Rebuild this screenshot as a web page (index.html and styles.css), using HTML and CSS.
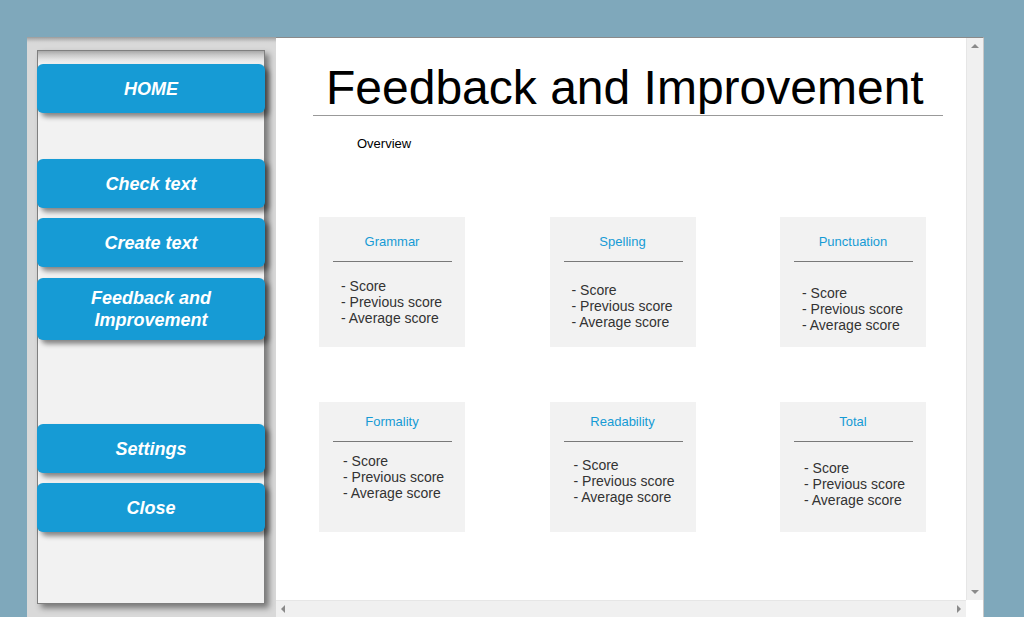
FILE: index.html
```html
<!DOCTYPE html>
<html lang="en">
<head>
<meta charset="utf-8">
<title>Feedback and Improvement</title>
<link rel="stylesheet" href="styles.css">
</head>
<body>
<div class="window">
  <aside class="sidebar">
    <nav class="panel">
      <div class="nav-btn nav-home">HOME</div>
      <div class="nav-btn nav-check">Check text</div>
      <div class="nav-btn nav-create">Create text</div>
      <div class="nav-btn nav-feedback">Feedback and<br>Improvement</div>
      <div class="nav-btn nav-settings">Settings</div>
      <div class="nav-btn nav-close">Close</div>
    </nav>
  </aside>
  <section class="main">
    <div class="main-body">
      <div class="content">
        <header class="page-head"><h1 class="page-title">Feedback and Improvement</h1></header>
        <p class="overview">Overview</p>
        <div class="cards">
          <div class="card card-top">
            <div class="card-title">Grammar</div>
            <div class="card-rule"></div>
            <ul class="card-list list-a"><li>- Score</li><li>- Previous score</li><li>- Average score</li></ul>
          </div>
          <div class="card card-top">
            <div class="card-title">Spelling</div>
            <div class="card-rule"></div>
            <ul class="card-list list-b"><li>- Score</li><li>- Previous score</li><li>- Average score</li></ul>
          </div>
          <div class="card card-top">
            <div class="card-title">Punctuation</div>
            <div class="card-rule"></div>
            <ul class="card-list list-c"><li>- Score</li><li>- Previous score</li><li>- Average score</li></ul>
          </div>
          <div class="card card-bottom">
            <div class="card-title">Formality</div>
            <div class="card-rule"></div>
            <ul class="card-list list-d"><li>- Score</li><li>- Previous score</li><li>- Average score</li></ul>
          </div>
          <div class="card card-bottom">
            <div class="card-title">Readability</div>
            <div class="card-rule"></div>
            <ul class="card-list list-e"><li>- Score</li><li>- Previous score</li><li>- Average score</li></ul>
          </div>
          <div class="card card-bottom">
            <div class="card-title">Total</div>
            <div class="card-rule"></div>
            <ul class="card-list list-f"><li>- Score</li><li>- Previous score</li><li>- Average score</li></ul>
          </div>
        </div>
      </div>
      <div class="vscroll">
        <span class="arrow arrow-up"></span>
        <span class="arrow arrow-down"></span>
      </div>
    </div>
    <div class="hscroll-row">
      <div class="hscroll">
        <span class="arrow arrow-left"></span>
        <span class="arrow arrow-right"></span>
      </div>
      <div class="corner"></div>
    </div>
  </section>
</div>
</body>
</html>
```
FILE: styles.css
```css
* { box-sizing: border-box; }

html, body {
  margin: 0;
  padding: 0;
}

body {
  width: 1024px;
  height: 617px;
  overflow: hidden;
  background: #7fa8bb;
  font-family: "Liberation Sans", Arial, sans-serif;
}

.window {
  margin: 37px 0 0 27px;
  width: 957px;
  height: 580px;
  display: flex;
}

/* ---------- sidebar ---------- */
.sidebar {
  width: 249px;
  flex: none;
  background: linear-gradient(#9a9a9a 0, #b5b5b5 2px, #d4d4d4 5px, #d9d9d9 7px);
  padding: 13px 0 0 10px;
}

.panel {
  width: 228px;
  height: 554px;
  border: 1px solid #7f7f7f;
  background: linear-gradient(#a8a8a8 0, #c9c9c9 4px, #e6e6e6 9px, #f2f2f2 13px);
  box-shadow: 4px 4px 6px rgba(0, 0, 0, 0.45);
  padding-top: 13px;
  display: flex;
  flex-direction: column;
}

.nav-btn {
  margin-left: -1px;
  width: 228px;
  height: 49px;
  border-radius: 6px;
  background: #169bd5;
  color: #ffffff;
  font-weight: bold;
  font-style: italic;
  font-size: 18px;
  line-height: 22px;
  display: flex;
  align-items: center;
  justify-content: center;
  text-align: center;
  box-shadow: 4px 4px 5px rgba(0, 0, 0, 0.45);
}

.nav-check { margin-top: 46px; }
.nav-create { margin-top: 10px; }
.nav-feedback { margin-top: 11px; height: 62px; }
.nav-settings { margin-top: 84px; }
.nav-close { margin-top: 10px; }

/* ---------- main ---------- */
.main {
  flex: 1;
  display: flex;
  flex-direction: column;
  border-top: 1px solid #8a8a8a;
  border-right: 1px solid #c8c8c8;
  background: #ffffff;
}

.main-body {
  flex: 1;
  display: flex;
  min-height: 0;
}

.content {
  flex: 1;
  padding-top: 22px;
}

.page-head {
  margin-left: 37px;
  width: 630px;
  border-bottom: 1px solid #999999;
  padding-left: 13px;
}

.page-title {
  margin: 0;
  font-weight: normal;
  font-size: 48px;
  line-height: 55px;
  white-space: nowrap;
  color: #000000;
}

.overview {
  margin: 20px 0 0 81px;
  font-size: 13px;
  line-height: 15px;
  color: #000000;
}

.cards {
  margin: 66px 0 0 43px;
  display: grid;
  grid-template-columns: repeat(3, 146px);
  grid-auto-rows: 130px;
  column-gap: 84.5px;
  row-gap: 55px;
}

.card {
  background: #f2f2f2;
}

.card-title {
  font-size: 13px;
  line-height: 16px;
  color: #169bd5;
  text-align: center;
}

.card-top { padding-top: 17px; }
.card-bottom { padding-top: 12px; }

.card-rule {
  margin: 11px 13px 0 14px;
  height: 1px;
  background: #797979;
}

.card-list {
  list-style: none;
  margin: 0;
  font-size: 14px;
  line-height: 16px;
  color: #333333;
}

.card-top .card-list { padding-left: 22px; }
.card-bottom .card-list { padding-left: 24px; }

.list-a { padding-top: 16px; }
.list-b { padding-top: 20px; }
.list-c { padding-top: 23px; }
.list-d { padding-top: 11px; }
.list-e { padding-top: 15px; }
.list-f { padding-top: 18px; }

/* ---------- scrollbars ---------- */
.vscroll {
  width: 17px;
  flex: none;
  background: #f0f0f0;
  border-left: 1px solid #e6e6e6;
  display: flex;
  flex-direction: column;
  justify-content: space-between;
  align-items: center;
  padding: 6px 0 6px;
}

.hscroll-row {
  height: 17px;
  flex: none;
  display: flex;
}

.hscroll {
  flex: 1;
  background: #f0f0f0;
  border-top: 1px solid #e6e6e6;
  display: flex;
  justify-content: space-between;
  align-items: center;
  padding: 0 5px 0 5px;
}

.corner {
  width: 17px;
  background: #ffffff;
}

.arrow {
  width: 0;
  height: 0;
  display: block;
}

.arrow-up {
  border-left: 4px solid transparent;
  border-right: 4px solid transparent;
  border-bottom: 4px solid #8a8a8a;
}

.arrow-down {
  border-left: 4px solid transparent;
  border-right: 4px solid transparent;
  border-top: 4px solid #8a8a8a;
}

.arrow-left {
  border-top: 4px solid transparent;
  border-bottom: 4px solid transparent;
  border-right: 4px solid #8a8a8a;
}

.arrow-right {
  border-top: 4px solid transparent;
  border-bottom: 4px solid transparent;
  border-left: 4px solid #8a8a8a;
}
```
